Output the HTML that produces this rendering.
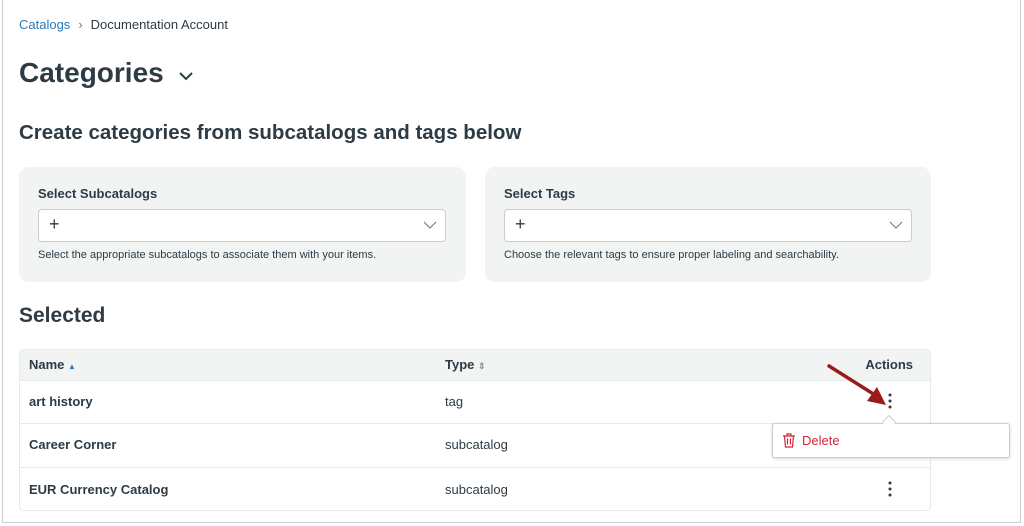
<!DOCTYPE html>
<html><head><style>
*{box-sizing:border-box;margin:0;padding:0}
body{width:1024px;height:526px;background:#fff;font-family:"Liberation Sans",sans-serif;color:#2d3b45;position:relative;overflow:hidden}
.frame{position:absolute;left:2px;top:0;width:1019px;height:523px;border:1px solid #c7cdd1;border-top:none}
.abs{position:absolute}
.card{position:absolute;top:167px;height:115px;background:#f2f4f4;border-radius:10px}
.lbl{position:absolute;left:19px;top:19px;font-size:13px;font-weight:bold}
.inp{position:absolute;left:19px;top:42px;height:33px;background:#fff;border:1px solid #c7cdd1;border-radius:4px}
.hint{position:absolute;left:19px;top:82px;font-size:11px;color:#2d3b45}
.row{position:absolute;left:19px;width:912px;border-top:1px solid #e6e9ea;font-size:13px}
</style></head><body>
<div class="frame"></div>
<div class="abs" style="left:19px;top:17px;font-size:13px"><span style="color:#2b7abc">Catalogs</span><span style="color:#6b7780;margin:0 8px">&#8250;</span>Documentation Account</div>
<div class="abs" style="left:19px;top:57px;font-size:28px;font-weight:bold">Categories</div>
<svg class="abs" style="left:178px;top:71px" width="16" height="10"><path d="M2 2l6 6 6-6" stroke="#2d3b45" stroke-width="2" fill="none"/></svg>
<div class="abs" style="left:19px;top:121px;font-size:20.5px;font-weight:bold">Create categories from subcatalogs and tags below</div>
<div class="card" style="left:19px;width:447px">
<div class="lbl">Select Subcatalogs</div>
<div class="inp" style="width:408px"><span class="abs" style="left:10px;top:4px;font-size:18px">+</span><svg class="abs" style="right:8px;top:11px" width="14" height="8"><path d="M1 1l6 6 6-6" stroke="#6b7780" fill="none"/></svg></div>
<div class="hint">Select the appropriate subcatalogs to associate them with your items.</div>
</div>
<div class="card" style="left:485px;width:446px">
<div class="lbl">Select Tags</div>
<div class="inp" style="width:408px"><span class="abs" style="left:10px;top:4px;font-size:18px">+</span><svg class="abs" style="right:8px;top:11px" width="14" height="8"><path d="M1 1l6 6 6-6" stroke="#6b7780" fill="none"/></svg></div>
<div class="hint">Choose the relevant tags to ensure proper labeling and searchability.</div>
</div>
<div class="abs" style="left:19px;top:304px;font-size:21px;font-weight:bold">Selected</div>
<div class="abs" style="left:19px;top:349px;width:912px;height:162px;border:1px solid #e6e9ea;border-radius:5px"></div>
<div class="abs" style="left:20px;top:350px;width:910px;height:30px;background:#f2f4f4;border-radius:4px 4px 0 0;font-size:13px;font-weight:bold">
<span class="abs" style="left:9px;top:7px">Name <span style="color:#2b7abc;font-size:8px">&#9650;</span></span>
<span class="abs" style="left:425px;top:7px">Type <span style="color:#8b969e;font-size:9px">&#8661;</span></span>
<span class="abs" style="right:17px;top:7px">Actions</span></div>
<div class="row" style="top:380px;height:43px"><b class="abs" style="left:10px;top:13px">art history</b><span class="abs" style="left:426px;top:13px">tag</span></div>
<div class="row" style="top:423px;height:44px"><b class="abs" style="left:10px;top:13px">Career Corner</b><span class="abs" style="left:426px;top:13px">subcatalog</span></div>
<div class="row" style="top:467px;height:44px"><b class="abs" style="left:10px;top:14px">EUR Currency Catalog</b><span class="abs" style="left:426px;top:14px">subcatalog</span></div>
<svg class="abs" style="left:886px;top:393px" width="8" height="16"><circle cx="4" cy="2" r="1.5" fill="#2d3b45"/><circle cx="4" cy="8" r="1.5" fill="#2d3b45"/><circle cx="4" cy="14" r="1.5" fill="#2d3b45"/></svg>
<svg class="abs" style="left:886px;top:481px" width="8" height="16"><circle cx="4" cy="2" r="1.5" fill="#2d3b45"/><circle cx="4" cy="8" r="1.5" fill="#2d3b45"/><circle cx="4" cy="14" r="1.5" fill="#2d3b45"/></svg>
<svg class="abs" style="left:825px;top:362px" width="70" height="50"><path d="M4 4L50 33" stroke="#9b1b1b" stroke-width="3.5" stroke-linecap="round"/><path d="M61 43L42 39L52 25Z" fill="#9b1b1b"/></svg>
<div class="abs" style="left:772px;top:423px;width:238px;height:35px;background:#fff;border:1px solid #c7cdd1;border-radius:3px;box-shadow:0 1px 3px rgba(0,0,0,.15)">
<svg class="abs" style="left:9px;top:9px" width="14" height="15"><path d="M1 3h12M5 3V1h4v2M2.5 3l1 11h7l1-11M5.5 5.5v6M8.5 5.5v6" stroke="#d0263a" fill="none" stroke-width="1.2"/></svg>
<span class="abs" style="left:29px;top:9px;font-size:13px;color:#d0263a">Delete</span></div>
<div class="abs" style="left:884px;top:417px;width:10px;height:10px;background:#fff;border-left:1px solid #c7cdd1;border-top:1px solid #c7cdd1;transform:rotate(45deg)"></div>
</body></html>
